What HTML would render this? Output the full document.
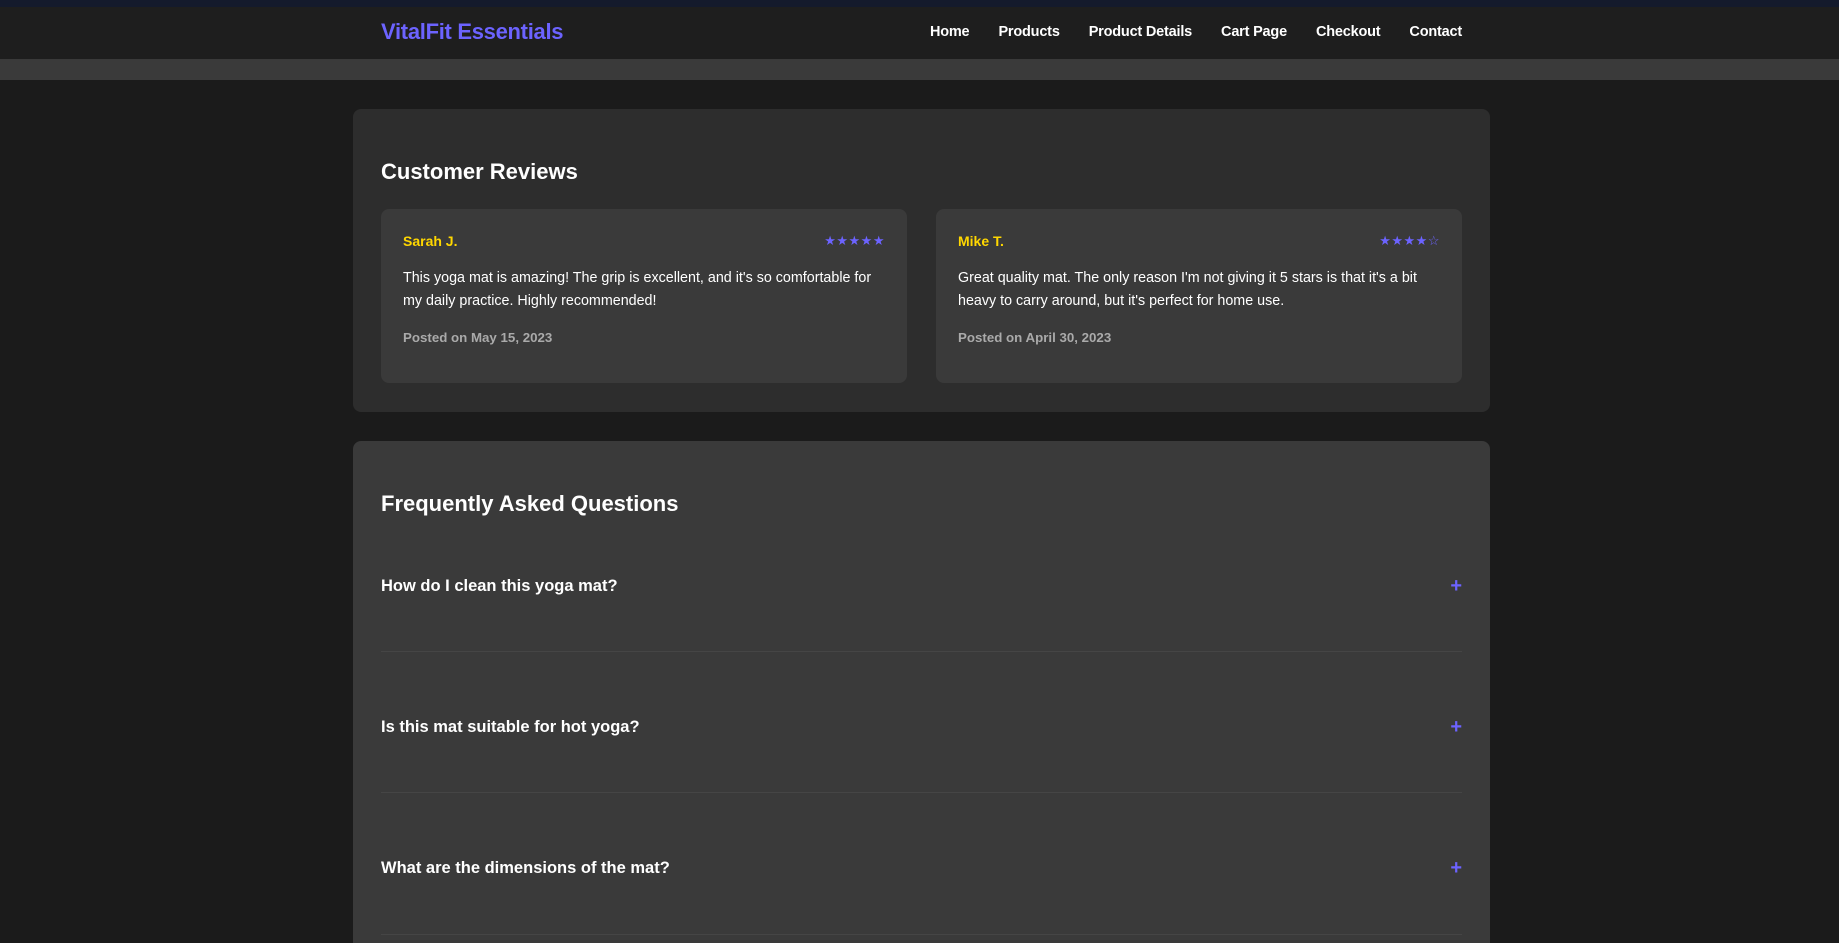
<!DOCTYPE html>
<html style="width:1839px;height:943px;overflow:hidden"><head><meta charset="utf-8"><style>
*{margin:0;padding:0;box-sizing:border-box}
body{width:1839px;height:943px;overflow:hidden;position:relative;background:#1b1b1b;font-family:"Liberation Sans",Arial,sans-serif;color:#fff}
.top{height:7px;background:#141a2c}
nav{height:52px;background:#1e1e1e;position:relative}
.logo{position:absolute;left:381px;top:12px;font-size:22px;font-weight:bold;color:#6c63ff;letter-spacing:-0.3px}
.links{position:absolute;right:377px;top:17px;display:flex;gap:29px;font-size:14.5px;font-weight:bold;letter-spacing:-0.2px}
.bar{height:21px;background:#3a3a3a}
.sec{position:absolute;left:353px;width:1137px;border-radius:8px}
.rev{top:109px;height:303px;background:#2d2d2d}
.faq{top:441px;height:502px;border-radius:8px 8px 0 0;background:#3a3a3a}
h2{position:absolute;left:28px;font-size:22px;font-weight:bold}
.card{position:absolute;top:100px;width:526px;height:174px;background:#3a3a3a;border-radius:8px;padding:0 22px}
.name{position:absolute;left:22px;top:24px;font-size:14px;font-weight:bold;color:#ffd700}
.stars{position:absolute;right:22px;top:24px;font-size:13px;color:#6c63ff;letter-spacing:0.5px}
.txt{position:absolute;left:22px;right:22px;top:58px;font-size:14.3px;line-height:23px}
.date{position:absolute;left:22px;top:121px;font-size:13.3px;font-weight:bold;color:#aaa}
.q{position:absolute;left:28px;right:28px;height:1px;background:#454545}
.qt{position:absolute;left:28px;font-size:16.5px;font-weight:bold}
.pl{position:absolute;right:28px;font-size:20px;font-weight:bold;color:#6c63ff}
</style></head><body>
<div class="top"></div>
<nav><div class="logo">VitalFit Essentials</div>
<div class="links"><span>Home</span><span>Products</span><span>Product Details</span><span>Cart Page</span><span>Checkout</span><span>Contact</span></div></nav>
<div class="bar"></div>
<div class="sec rev">
<h2 style="top:50px">Customer Reviews</h2>
<div class="card" style="left:28px"><div class="name">Sarah J.</div><div class="stars">★★★★★</div>
<div class="txt">This yoga mat is amazing! The grip is excellent, and it's so comfortable for my daily practice. Highly recommended!</div>
<div class="date">Posted on May 15, 2023</div></div>
<div class="card" style="left:583px"><div class="name">Mike T.</div><div class="stars">★★★★☆</div>
<div class="txt">Great quality mat. The only reason I'm not giving it 5 stars is that it's a bit heavy to carry around, but it's perfect for home use.</div>
<div class="date">Posted on April 30, 2023</div></div>
</div>
<div class="sec faq">
<h2 style="top:50px">Frequently Asked Questions</h2>
<div class="qt" style="top:136px">How do I clean this yoga mat?</div><div class="pl" style="top:134px">+</div><div class="q" style="top:210px"></div>
<div class="qt" style="top:277px">Is this mat suitable for hot yoga?</div><div class="pl" style="top:275px">+</div><div class="q" style="top:351px"></div>
<div class="qt" style="top:418px">What are the dimensions of the mat?</div><div class="pl" style="top:416px">+</div><div class="q" style="top:493px"></div>
</div>
</body></html>
